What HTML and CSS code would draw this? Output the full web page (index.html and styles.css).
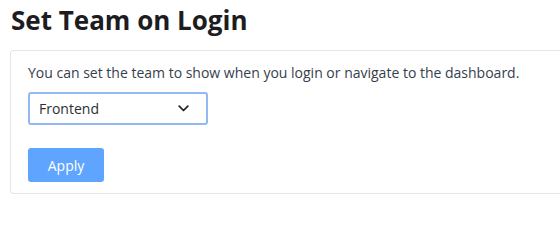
FILE: index.html
```html
<!DOCTYPE html>
<html>
<head>
<meta charset="utf-8">
<link rel="stylesheet" href="styles.css">
</head>
<body>
<h1 class="title">Set Team on Login</h1>
<div class="card">
  <p class="desc">You can set the team to show when you login or navigate to the dashboard.</p>
  <div class="select">
    <span class="select-value">Frontend</span>
    <svg class="chevron" width="11" height="7" viewBox="0 0 11 7"><path d="M1.2 1.2 L5.5 5.5 L9.8 1.2" fill="none" stroke="#222" stroke-width="1.7" stroke-linecap="round" stroke-linejoin="round"/></svg>
  </div>
  <button class="apply">Apply</button>
</div>
</body>
</html>
```
FILE: styles.css
```css
html, body {
  margin: 0;
  padding: 0;
  overflow: hidden;
  background: #fff;
}
body {
  padding: 0 0 0 10px;
  font-family: "Open Sans", sans-serif;
}
.title {
  margin: 0;
  padding: 2px 0 0 1px;
  height: 48px;
  box-sizing: border-box;
  font-size: 26px;
  font-weight: 700;
  color: #1d1d1f;
  line-height: 36px;
}
.card {
  border: 1px solid #e3e5ec;
  border-right: none;
  border-radius: 4px 0 0 4px;
  padding: 12px 17px 11px;
  height: 144px;
  box-sizing: border-box;
  margin-top: 2px;
}
.desc {
  margin: 0;
  font-size: 14px;
  line-height: 20px;
  color: #36404c;
}
.select {
  margin-top: 9px;
  width: 180px;
  height: 33px;
  box-sizing: border-box;
  border: 2px solid #94b8f2;
  border-radius: 3px;
  display: flex;
  align-items: center;
  justify-content: space-between;
  padding: 0 17px 0 9px;
}
.select-value {
  font-size: 14px;
  color: #2a2f36;
}
.chevron {
  display: block;
}
.apply {
  display: block;
  margin-top: 23px;
  width: 76px;
  height: 34px;
  border: none;
  border-radius: 3px;
  background: #5fa5ff;
  color: #fff;
  font-family: "Open Sans", sans-serif;
  font-size: 14px;
}
```
